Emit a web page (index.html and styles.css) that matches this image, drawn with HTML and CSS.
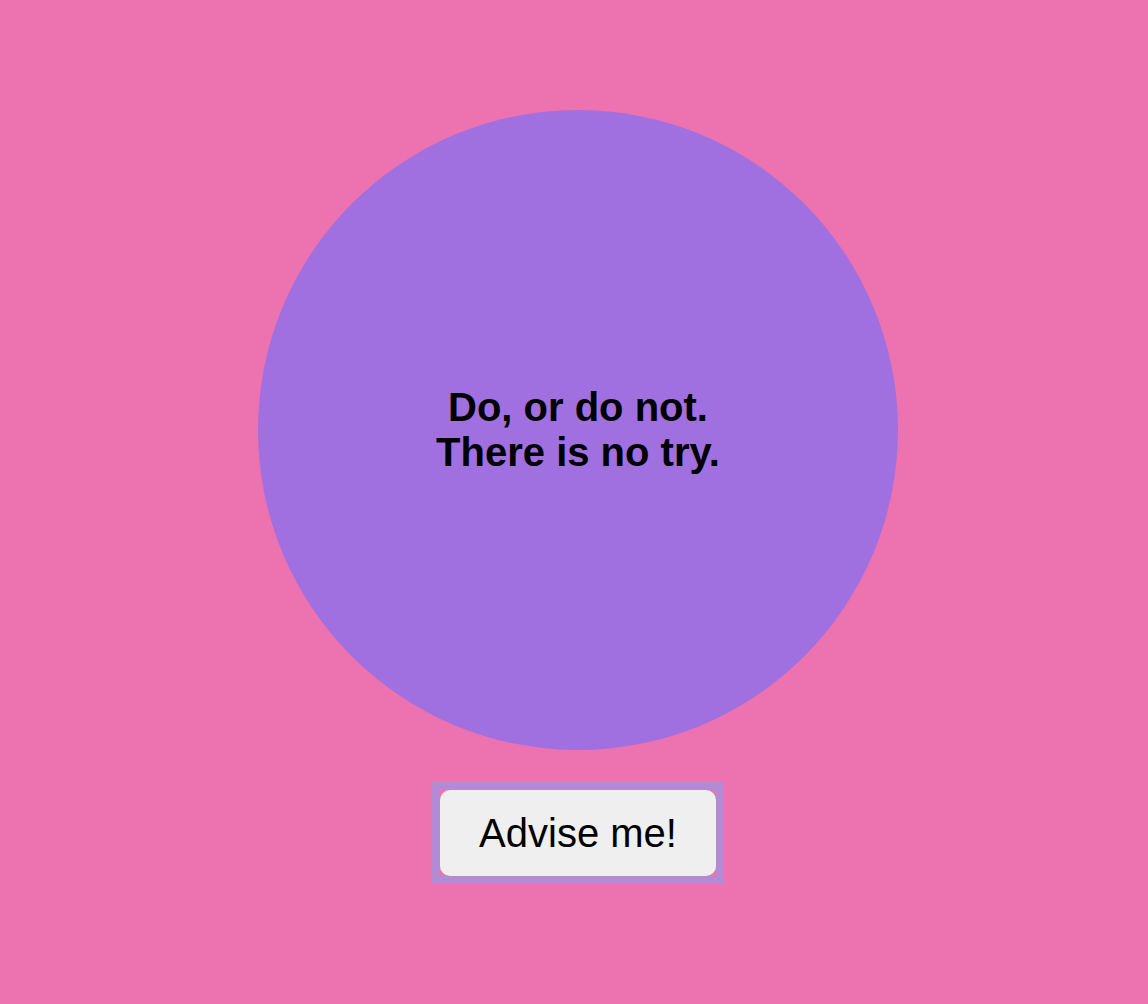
FILE: index.html
```html
<!DOCTYPE html>
<html>
<head>
<meta charset="utf-8">
<link rel="stylesheet" href="styles.css">
</head>
<body>
<main class="page">
  <div class="orb">
    <p class="quote">Do, or do not.<br>There is no try.</p>
  </div>
  <div class="frame">
    <button class="advise">Advise me!</button>
  </div>
</main>
</body>
</html>
```
FILE: styles.css
```css
html, body {
  margin: 0;
  padding: 0;
  background: #ed72b0;
  font-family: "Liberation Sans", Arial, Helvetica, sans-serif;
}
.page {
  height: 1004px;
  box-sizing: border-box;
  padding: 110px 0 0 8px;
  display: flex;
  flex-direction: column;
  align-items: center;
}
.orb {
  width: 640px;
  height: 640px;
  border-radius: 50%;
  background: #a070e0;
  display: flex;
  align-items: center;
  justify-content: center;
}
.quote {
  margin: 0;
  font-size: 40px;
  font-weight: bold;
  line-height: 45px;
  text-align: center;
  color: #000;
}
.frame {
  margin-top: 32px;
  border: 8px solid #b38ad4;
  background: #ed72b0;
  display: flex;
}
.advise {
  width: 276px;
  height: 86px;
  border: none;
  border-radius: 10px;
  background: #efefef;
  color: #000;
  font-family: "Liberation Sans", Arial, Helvetica, sans-serif;
  font-size: 40px;
  padding: 0;
}
```
